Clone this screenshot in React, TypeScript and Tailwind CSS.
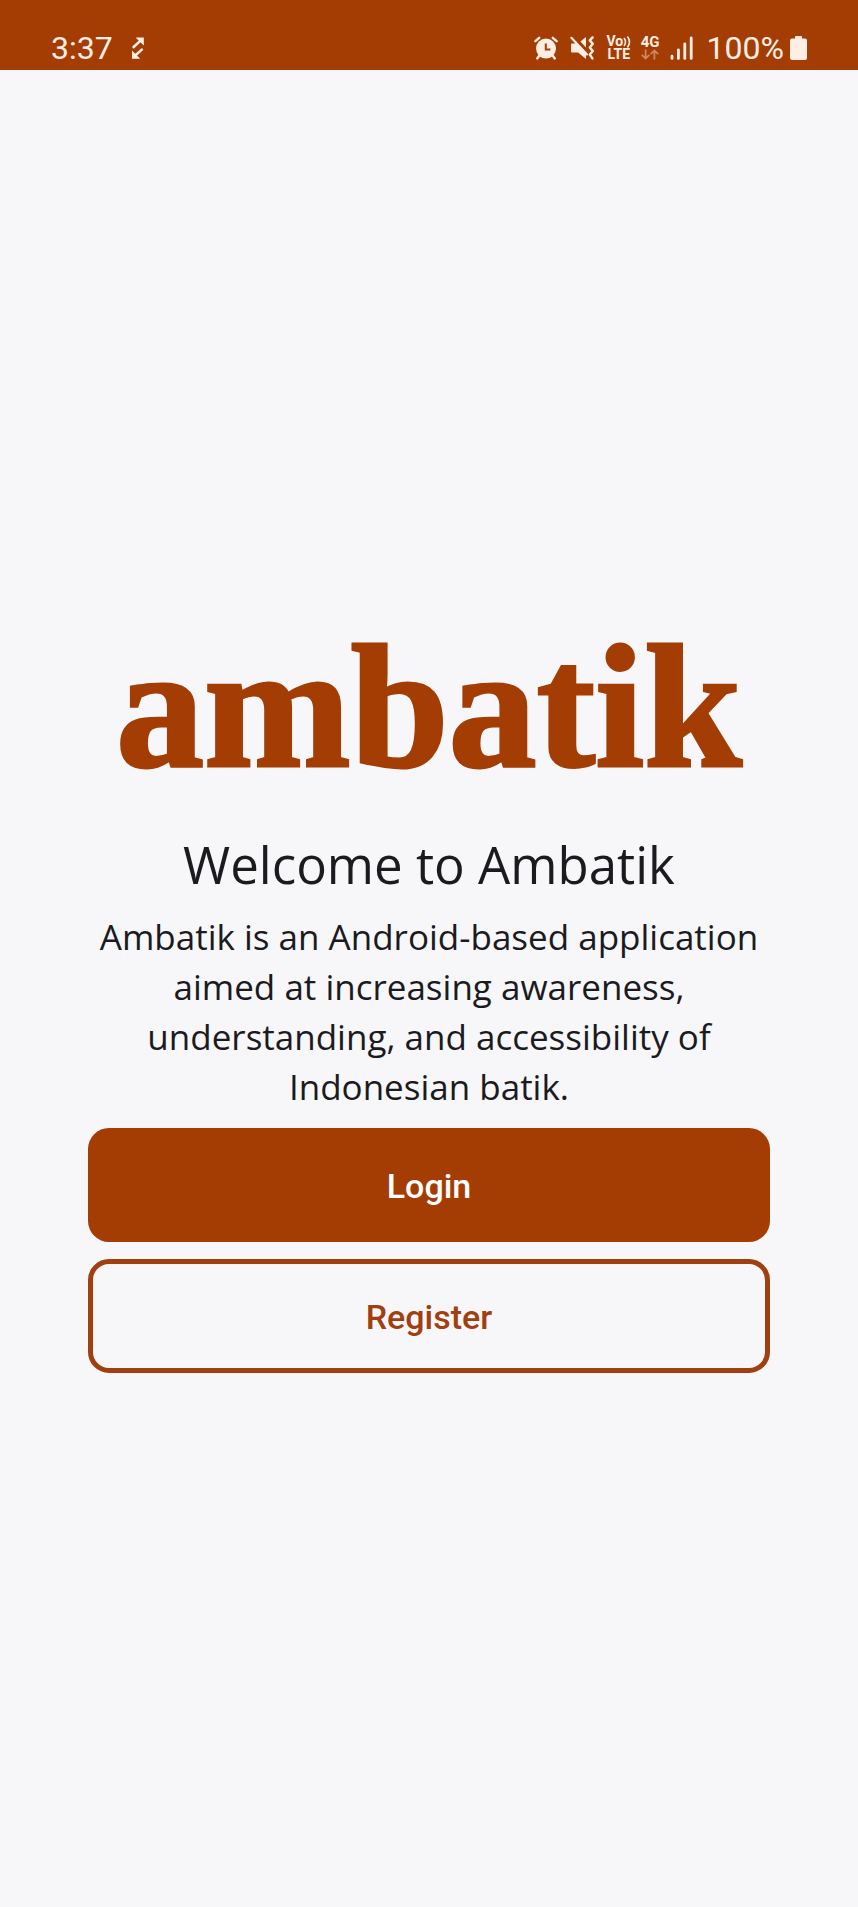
import React from "react";

function RotateArrows() {
  return (
    <svg aria-hidden="true" viewBox="0 0 14 24" className="h-6 w-[14px]" fill="none">
      <path d="M4.6 1.4H12.8V9.6ZM1 22.8V14.6L9.2 22.8Z" fill="#ffeee3" />
      <path d="M2.6 11L9.6 4.6M4 19.8L10.8 13.6" stroke="#ffeee3" strokeWidth="2.6" strokeLinecap="round" />
    </svg>
  );
}

function Alarm() {
  return (
    <svg aria-hidden="true" viewBox="0 0 24 24" className="size-6" fill="none">
      <circle cx="12" cy="12.6" r="10" fill="#ffeee3" />
      <path d="M1.4 5.2L5.2 1.8M22.6 5.2L18.8 1.8M5.4 19.6L3.2 22.4M18.6 19.6L20.8 22.4" stroke="#ffeee3" strokeWidth="2.4" strokeLinecap="round" />
      <path d="M11.8 7.4V13.4H16.4" stroke="#a43d03" strokeWidth="2" />
    </svg>
  );
}

function Muted() {
  return (
    <svg aria-hidden="true" viewBox="0 0 25 24" className="h-6 w-[25px]" fill="none">
      <path d="M10.4 5.6L16 1V11.4ZM1 8.6Q1 7.6 2 7.6H6.4L16 17.4V23L8 16.6H2Q1 16.6 1 15.6Z" fill="#ffeee3" />
      <path d="M1.4 1.8L17 18.4" stroke="#ffeee3" strokeWidth="2.2" strokeLinecap="round" />
      <path d="M22.6 1.4L19.8 4.4L22.8 7.8L19.8 11.4L22.8 15L19.8 18.6L22.4 22.4" stroke="#ffeee3" strokeWidth="2.4" strokeLinecap="round" strokeLinejoin="round" />
    </svg>
  );
}

function DataArrows() {
  return (
    <svg aria-hidden="true" viewBox="0 0 18 11" className="h-[11px] w-[18px]" fill="none" stroke="#cf8560" strokeWidth="1.8">
      <path d="M4.6 0.4V9.4M0.8 5.8L4.6 9.6L8.4 5.8M13.4 10.6V1.6M9.6 5.2L13.4 1.4L17.2 5.2" />
    </svg>
  );
}

function Signal() {
  return (
    <svg aria-hidden="true" viewBox="0 0 23 24" className="h-6 w-[23px]" stroke="#ffeee3" strokeWidth="2.8" strokeLinecap="round">
      <path d="M2 20.2V22.4M8.4 13.8V22.4M14.8 7.8V22.4M21.2 2V22.4" />
    </svg>
  );
}

function Battery() {
  return (
    <svg aria-hidden="true" viewBox="0 0 17 24" className="h-6 w-[17px]" fill="#ffeee3">
      <path d="M5 1Q5 0 6 0H11Q12 0 12 1V2.6H15Q17 2.6 17 4.6V22Q17 24 15 24H2Q0 24 0 22V4.6Q0 2.6 2 2.6H5Z" />
    </svg>
  );
}

function StatusBar() {
  return (
    <header className="flex h-[70px] items-end justify-between bg-[#a43d03] px-[51px] pb-1 font-['Roboto',sans-serif] text-[#ffeee3]">
      <div className="flex h-9 items-center gap-[18px]">
        <time className="text-[32px] leading-9">3:37</time>
        <RotateArrows />
      </div>
      <div className="flex h-9 items-center">
        <div className="flex items-center gap-3">
          <Alarm />
          <Muted />
          <div className="flex w-6 flex-col items-center text-[14px] leading-[13px] font-bold">
            <span className="flex items-center">
              Vo
              <svg aria-hidden="true" viewBox="0 0 8 12" className="h-3 w-2" fill="none" stroke="#ffeee3" strokeWidth="1.6">
                <path d="M1 2Q4 6 1 10M4.4 0.6Q8.6 6 4.4 11.4" />
              </svg>
            </span>
            <span>LTE</span>
          </div>
        </div>
        <div className="ml-[10px] flex flex-col items-center text-[15px] leading-[13px] font-bold">
          <span>4G</span>
          <DataArrows />
        </div>
        <div className="ml-[10px] flex items-center gap-[14px]">
          <Signal />
          <div className="flex items-center gap-[6px]">
            <span className="text-[32px] leading-9">100%</span>
            <Battery />
          </div>
        </div>
      </div>
    </header>
  );
}

export default function App() {
  return (
    <div className="flex min-h-screen flex-col bg-[#f7f7fa] text-[#1b1b1f]">
      <StatusBar />
      <main className="flex flex-1 flex-col justify-center px-[88px] text-center font-['Open_Sans',sans-serif]">
        <p className="mb-[21px] font-['Liberation_Serif',serif] text-[176px] leading-[204px] font-bold text-[#a43d03] [-webkit-text-stroke:3px_#a43d03]">
          ambatik
        </p>
        <h1 className="text-[51px] leading-[68px]">Welcome to Ambatik</h1>
        <p className="mt-[14px] text-[35px] leading-[50px]">
          Ambatik is an Android-based application aimed at increasing awareness, understanding, and accessibility of Indonesian batik.
        </p>
        <div className="mt-4 flex flex-col gap-[17px] font-['Roboto',sans-serif] text-[34px] font-medium">
          <button type="button" className="h-[114px] rounded-[21px] bg-[#a43d03] pt-1 text-white">
            Login
          </button>
          <button type="button" className="h-[114px] rounded-[21px] border-[5px] border-[#a04010] pt-1 text-[#a04010]">
            Register
          </button>
        </div>
      </main>
    </div>
  );
}
